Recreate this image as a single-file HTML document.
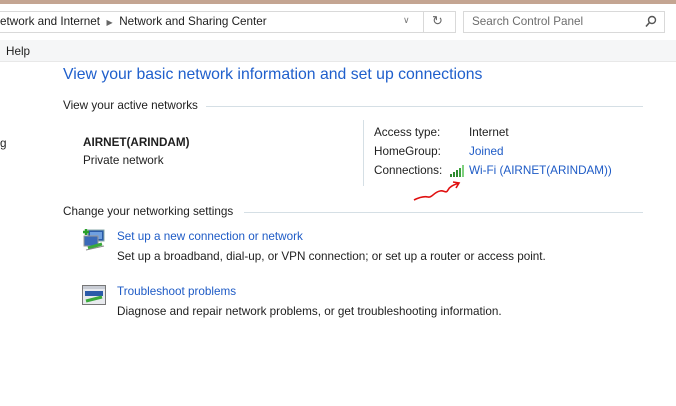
<!DOCTYPE html>
<html><head><meta charset="utf-8"><style>
*{margin:0;padding:0;box-sizing:border-box}
body{width:676px;height:406px;overflow:hidden;background:#fff;font-family:"Liberation Sans",sans-serif;font-size:11.7px;color:#1e1e1e;position:relative}
.a{position:absolute;white-space:nowrap}
.lnk{color:#1e5bc6}
.line{position:absolute;height:1px;background:#d5dfe5}
</style></head><body>
<div class="a" style="left:0;top:0;width:676px;height:4px;background:#c4a592"></div>
<div class="a" style="left:-2px;top:11px;width:458px;height:22px;border:1px solid #d9d9d9;background:#fff"></div>
<div class="a" style="left:0;top:15px;">etwork and Internet&nbsp;&nbsp;<span style="font-size:8px;color:#666">&#9654;</span>&nbsp;&nbsp;Network and Sharing Center</div>
<div class="a" style="left:403px;top:15px;font-size:9px;color:#777">&#8744;</div>
<div class="a" style="left:423px;top:11px;width:1px;height:22px;background:#d9d9d9"></div>
<div class="a" style="left:432px;top:13px;font-size:13px;color:#666">&#8635;</div>
<div class="a" style="left:463px;top:11px;width:202px;height:22px;border:1px solid #d9d9d9;background:#fff"></div>
<div class="a" style="left:472px;top:15px;color:#6d6d6d">Search Control Panel</div>
<svg class="a" style="left:645px;top:15px" width="12" height="13" viewBox="0 0 12 13"><circle cx="7" cy="5" r="3.5" fill="none" stroke="#555" stroke-width="1.4"/><line x1="4.5" y1="7.5" x2="1" y2="11.5" stroke="#555" stroke-width="1.6"/></svg>
<div class="a" style="left:0;top:40px;width:676px;height:22px;background:#f5f6f7;border-bottom:1px solid #e8e8e8"></div>
<div class="a" style="left:6px;top:45px">Help</div>
<div class="a" style="left:63px;top:66px;font-size:15.8px;color:#1f5fcc">View your basic network information and set up connections</div>
<div class="a" style="left:63px;top:99px">View your active networks</div>
<div class="line" style="left:206px;top:106px;width:437px"></div>
<div class="a" style="left:0;top:137px">g</div>
<div class="a" style="left:83px;top:136px;font-weight:bold">AIRNET(ARINDAM)</div>
<div class="a" style="left:83px;top:154px">Private network</div>
<div class="a" style="left:363px;top:120px;width:1px;height:66px;background:#d5dfe5"></div>
<div class="a" style="left:374px;top:126px">Access type:</div>
<div class="a" style="left:469px;top:126px">Internet</div>
<div class="a" style="left:374px;top:145px">HomeGroup:</div>
<div class="a lnk" style="left:469px;top:145px">Joined</div>
<div class="a" style="left:374px;top:164px">Connections:</div>
<svg class="a" style="left:450px;top:165px" width="15" height="12" viewBox="0 0 15 12"><rect x="0" y="9" width="2" height="3" fill="#2e8b2e"/><rect x="3" y="7" width="2" height="5" fill="#2e8b2e"/><rect x="6" y="5" width="2" height="7" fill="#2e8b2e"/><rect x="9" y="3" width="2" height="9" fill="#3aa33a"/><rect x="12" y="0" width="2" height="12" fill="#7fd07f"/></svg>
<div class="a lnk" style="left:469px;top:164px">Wi-Fi (AIRNET(ARINDAM))</div>
<svg class="a" style="left:412px;top:180px" width="50" height="24" viewBox="0 0 50 24"><path d="M2 20 C8 17 12 16 16 17 C20 18 22 12 28 11 C32 10 34 14 36 10 C38 6 42 5 47 3 M41 2 L47 3 L44 8" fill="none" stroke="#e01010" stroke-width="1.6"/></svg>
<div class="a" style="left:63px;top:205px">Change your networking settings</div>
<div class="line" style="left:244px;top:212px;width:399px"></div>
<svg class="a" style="left:82px;top:228px" width="26" height="24" viewBox="0 0 26 24"><rect x="6" y="2" width="16" height="11" fill="#2a5aa8" stroke="#8aa" /><rect x="8" y="4" width="12" height="7" fill="#6fa0e0"/><rect x="2" y="8" width="14" height="10" fill="#3a6ab8" stroke="#999"/><path d="M1 4h6M4 1v6" stroke="#2aa02a" stroke-width="2.5"/><path d="M6 20 L20 16" stroke="#3aaa3a" stroke-width="3"/><path d="M4 22 L22 18" stroke="#888" stroke-width="1"/></svg>
<div class="a lnk" style="left:117px;top:230px">Set up a new connection or network</div>
<div class="a" style="left:117px;top:250px">Set up a broadband, dial-up, or VPN connection; or set up a router or access point.</div>
<svg class="a" style="left:82px;top:285px" width="24" height="20" viewBox="0 0 24 20"><rect x="0.5" y="0.5" width="23" height="19" fill="#e8eaee" stroke="#777"/><rect x="1" y="1" width="22" height="3" fill="#c8ccd4"/><rect x="3" y="6" width="18" height="5" fill="#2a5aa8"/><path d="M4 16 L20 12" stroke="#3aaa3a" stroke-width="3"/></svg>
<div class="a lnk" style="left:117px;top:285px">Troubleshoot problems</div>
<div class="a" style="left:117px;top:305px">Diagnose and repair network problems, or get troubleshooting information.</div>
</body></html>
